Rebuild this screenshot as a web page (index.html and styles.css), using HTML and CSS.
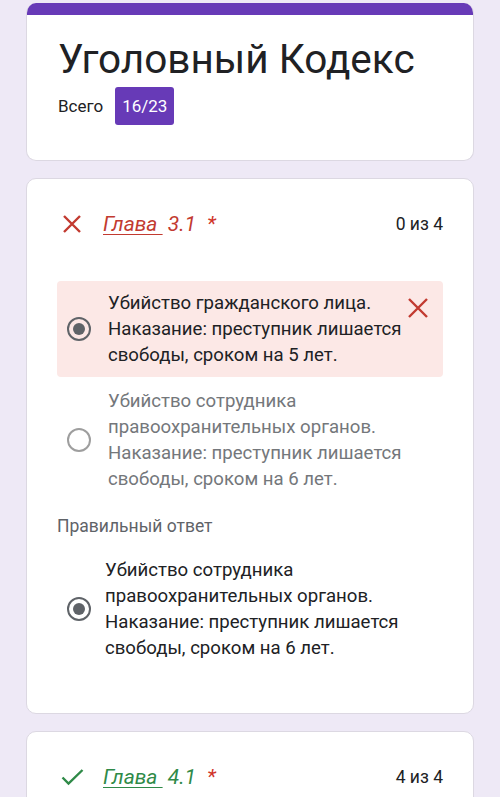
FILE: index.html
```html
<!DOCTYPE html>
<html lang="ru">
<head>
    <meta charset="UTF-8">
    <meta name="viewport" content="width=device-width, initial-scale=1.0">
    <title>Уголовный Кодекс</title>
    <link rel="stylesheet" href="styles.css">
</head>
<body>
    <div class="page">
        <div class="card title-card">
            <div class="title-bar"></div>
            <div class="title-body">
                <h1>Уголовный Кодекс</h1>
                <div class="total">
                    <span>Всего</span>
                    <span class="score-badge">16/23</span>
                </div>
            </div>
        </div>

        <div class="card question">
            <div class="q-head wrong">
                <svg class="mark" width="24" height="24" viewBox="0 0 24 24">
                    <path d="M4 4 L20 20 M20 4 L4 20" stroke="currentColor" stroke-width="2.4" fill="none"/>
                </svg>
                <div class="q-title"><span class="q-link">Глава </span> 3.1<span class="req">*</span></div>
                <div class="q-points">0 из 4</div>
            </div>

            <div class="option picked-wrong">
                <span class="radio checked"></span>
                <div class="opt-text">Убийство гражданского лица. Наказание: преступник лишается свободы, сроком на 5 лет.</div>
                <svg class="opt-mark" width="24" height="24" viewBox="0 0 24 24">
                    <path d="M3 3 L21 21 M21 3 L3 21" stroke="currentColor" stroke-width="2.4" fill="none"/>
                </svg>
            </div>
            <div class="option muted">
                <span class="radio"></span>
                <div class="opt-text">Убийство сотрудника правоохранительных органов. Наказание: преступник лишается свободы, сроком на 6 лет.</div>
            </div>

            <div class="correct-label">Правильный ответ</div>
            <div class="option answer">
                <span class="radio checked"></span>
                <div class="opt-text">Убийство сотрудника правоохранительных органов. Наказание: преступник лишается свободы, сроком на 6 лет.</div>
            </div>
        </div>

        <div class="card question">
            <div class="q-head right">
                <svg class="mark" width="24" height="24" viewBox="0 0 24 24">
                    <polyline points="2.5,12.5 8.5,18.5 22.5,5" stroke="currentColor" stroke-width="2.4" fill="none"/>
                </svg>
                <div class="q-title"><span class="q-link">Глава </span> 4.1<span class="req">*</span></div>
                <div class="q-points">4 из 4</div>
            </div>
        </div>
    </div>
</body>
</html>
```

FILE: styles.css
```css
body {
    font-family: Roboto, "Noto Sans", Arial, sans-serif;
    margin: 0;
    padding: 0;
    background-color: #eee9f6;
    color: #202124;
}
.page {
    padding: 3px 26px 40px;
}
.card {
    background: white;
    border: 1px solid #dcd8e2;
    border-radius: 10px;
    margin-bottom: 17px;
    overflow: hidden;
}
.title-card {
    border-top: none;
}
.title-bar {
    height: 12px;
    background-color: #673ab7;
}
.title-body {
    padding: 20px 31px 35px;
}
.title-body h1 {
    margin: 0;
    font-size: 40.5px;
    font-weight: 400;
    line-height: 49px;
    color: #202124;
}
.total {
    display: flex;
    align-items: center;
    gap: 12px;
    margin-top: 3px;
    font-size: 17px;
}
.score-badge {
    background-color: #673ab7;
    color: white;
    height: 38px;
    line-height: 38px;
    padding: 0 7px;
    border-radius: 3px;
    font-size: 17px;
}
.question {
    padding: 23px 30px 43px;
}
.q-head {
    display: flex;
    align-items: center;
    height: 44px;
    padding-left: 3px;
}
.q-head .mark {
    margin-right: 19px;
    flex: none;
}
.q-head.wrong {
    color: #c23a30;
}
.q-head.right {
    color: #2f8a48;
}
.q-title {
    flex: 1;
    font-size: 21px;
    font-style: italic;
    white-space: pre;
}
.q-link {
    text-decoration: underline;
    text-underline-offset: 3px;
    text-decoration-thickness: 1px;
}
.req {
    color: #d0352b;
    margin-left: 11px;
}
.q-points {
    font-size: 17.5px;
    color: #202124;
}
.option {
    display: flex;
    align-items: center;
    padding: 9px 13px 9px 10px;
    border-radius: 4px;
    margin-top: 2px;
}
.picked-wrong {
    background-color: #fce8e6;
    margin-top: 35px;
}
.opt-text {
    flex: 1;
    max-width: 300px;
    margin-left: 17px;
    font-size: 18.6px;
    line-height: 26px;
}
.answer .opt-text {
    margin-left: 14px;
}
.opt-mark {
    flex: none;
    align-self: flex-start;
    margin-top: 6px;
    margin-left: auto;
    color: #c23a30;
}
.muted .opt-text {
    color: #74777b;
}
.radio {
    flex: none;
    width: 24px;
    height: 24px;
    box-sizing: border-box;
    border: 2.5px solid #9e9e9e;
    border-radius: 50%;
    position: relative;
}
.radio.checked {
    border-color: #5f6368;
}
.radio.checked::after {
    content: "";
    position: absolute;
    left: 3.5px;
    top: 3.5px;
    width: 12px;
    height: 12px;
    border-radius: 50%;
    background-color: #5f6368;
}
.correct-label {
    margin-top: 15px;
    margin-bottom: 12px;
    font-size: 17.5px;
    line-height: 20px;
    color: #5f6368;
}
```
